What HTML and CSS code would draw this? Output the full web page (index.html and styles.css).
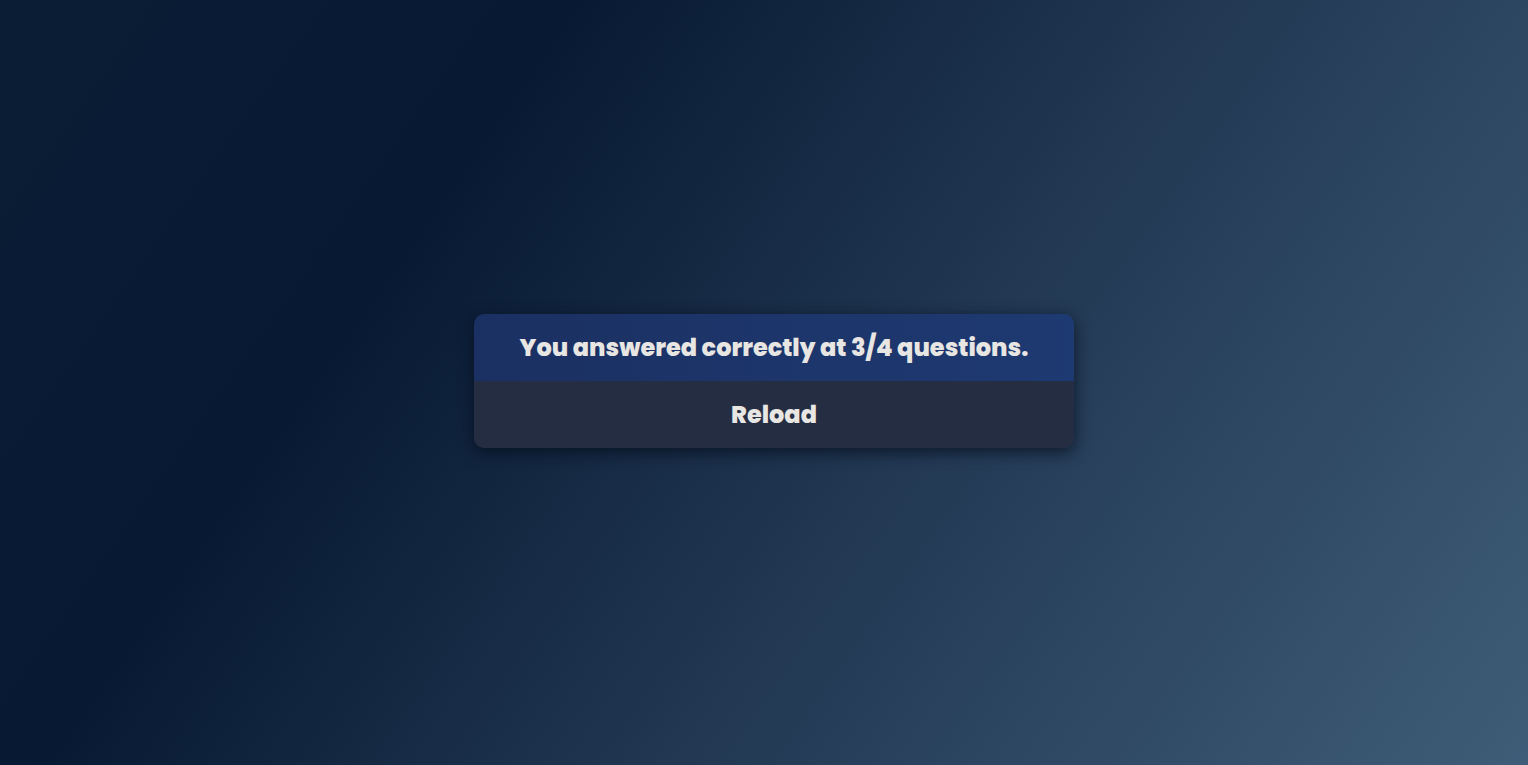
FILE: index.html
```html
<!DOCTYPE html>
<html lang="en">
<head>
<meta charset="utf-8">
<title>Quiz</title>
<link rel="stylesheet" href="styles.css">
</head>
<body>
  <main class="stage">
    <div class="card">
      <h2 class="result">You answered correctly at 3/4 questions.</h2>
      <button class="reload" type="button">Reload</button>
    </div>
  </main>
</body>
</html>
```
FILE: styles.css
```css
* { box-sizing: border-box; }
html, body { height: 100%; }
body {
  margin: 0;
  font-family: Poppins, Inter, "Noto Sans", sans-serif;
  background: linear-gradient(125deg, #0b1d35 0%, #081a33 28%, #213752 58%, #3f5d78 100%);
  color: #e8e6e3;
}
.stage {
  height: 100%;
  display: flex;
  align-items: center;
  justify-content: center;
  padding-left: 20px;
  padding-bottom: 3px;
}
.card {
  width: 600px;
  border-radius: 10px;
  overflow: hidden;
  box-shadow: 0 4px 16px rgba(4, 12, 26, 0.75);
  display: flex;
  flex-direction: column;
}
.result {
  margin: 0;
  height: 67px;
  display: flex;
  align-items: center;
  justify-content: center;
  background: linear-gradient(90deg, #1b3062, #1e3a72);
  font-size: 24px;
  font-weight: 800;
}
.reload {
  height: 67px;
  border: 0;
  background: #252d42;
  color: #e8e6e3;
  font-family: inherit;
  font-size: 24px;
  font-weight: 800;
  cursor: pointer;
}
```
